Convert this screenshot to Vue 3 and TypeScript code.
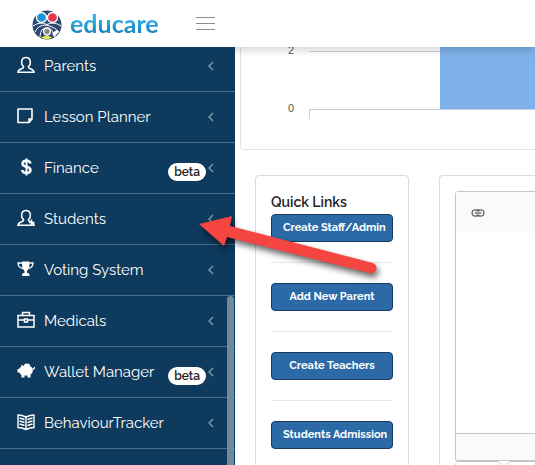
<script setup lang="ts">
interface NavItem {
  label: string
  icon: string
  beta?: boolean
}

const items: NavItem[] = [
  { label: 'Parents', icon: 'user' },
  { label: 'Lesson Planner', icon: 'note' },
  { label: 'Finance', icon: 'dollar', beta: true },
  { label: 'Students', icon: 'userAdd' },
  { label: 'Voting System', icon: 'trophy' },
  { label: 'Medicals', icon: 'case' },
  { label: 'Wallet Manager', icon: 'piggy', beta: true },
  { label: 'BehaviourTracker', icon: 'book' },
]

const links: string[] = ['Create Staff/Admin', 'Add New Parent', 'Create Teachers', 'Students Admission']
</script>

<template>
  <div class="app">
    <header class="topbar">
      <a href="#" class="brand" aria-label="educare home">
        <svg class="logo" viewBox="0 0 30 30" aria-hidden="true">
          <circle cx="15" cy="15" r="14.5" fill="#2d4870" />
          <path d="M1 16Q8 11 15 14.500Q22 11 29 16M3 22Q6 15 14 15Q23 17 27 22M8 27Q8 17 16 18Q22 20 23 27" fill="none" stroke="#fff" stroke-width="1" />
          <circle cx="9.500" cy="7.500" r="5" fill="#1b95d4" stroke="#fff" stroke-width="1.300" />
          <circle cx="20.500" cy="7.500" r="5" fill="#e8344f" stroke="#fff" stroke-width="1.300" />
          <circle cx="15" cy="21.500" r="3.400" fill="#8b8585" stroke="#fff" stroke-width="1.500" />
          <path d="M20 23L25 20L27 22L22 27Z" fill="#fff" />
          <path d="M9 27.500Q15 24 20 27.500Q15 31 9 27.500Z" fill="#e9e645" />
        </svg>
        <span class="word">educare</span>
      </a>
      <button class="burger" type="button" aria-label="Toggle menu"><i></i><i></i><i></i></button>
    </header>

    <nav class="sidebar">
      <ul class="menu">
        <li v-for="item in items" :key="item.label">
          <a href="#" class="row">
            <svg class="icon" viewBox="0 0 18 18" aria-hidden="true">
              <g v-if="item.icon === 'user' || item.icon === 'userAdd'" fill="none" stroke="currentColor" stroke-width="1.500">
                <path d="M6.500 10.500C3.500 8 4 1.500 9 1.500S14.500 8 11.500 10.500C11 12 12 12.300 14 13C16 13.800 17 14.300 17 16.300H1C1 14.300 2 13.800 4 13C6 12.300 7 12 6.500 10.500Z" />
                <path v-if="item.icon === 'userAdd'" d="M14.500 10.500V16M12 13.500H17.500" />
              </g>
              <g v-else-if="item.icon === 'note'" fill="none" stroke="currentColor" stroke-width="1.600">
                <path d="M1 2H15V12L12 15.500H1Z" stroke-linejoin="round" />
                <path d="M15 12H12V15.500" />
              </g>
              <g v-else-if="item.icon === 'dollar'" fill="none" stroke="currentColor">
                <path d="M13.500 5.500C13 3.500 11.500 2.800 9.500 2.800C7 2.800 5.500 4 5.500 5.800C5.500 10 13.500 7.500 13.500 12C13.500 14 12 15 9.500 15C7 15 5.500 14 5 12" stroke-width="2.500" />
                <path d="M9.500 0.500V17.500" stroke-width="2" />
              </g>
              <g v-else-if="item.icon === 'trophy'">
                <path d="M5 1.500H12.500V4Q12.500 9 10 11V13H11.500Q12.500 13 12.500 16H5Q5 13 6 13H7.500V11Q5 9 5 4Z" fill="currentColor" />
                <path d="M5 3H1Q1 7.500 6 8.500M12.500 3H16Q16 7.500 11.500 8.500" fill="none" stroke="currentColor" stroke-width="1.300" />
              </g>
              <g v-else-if="item.icon === 'case'" fill="none" stroke="currentColor" stroke-width="1.500">
                <path d="M1 4.500H17V16H1ZM5.500 4.500V1.500H12.500V4.500M1 9H7M11 9H17" />
                <path d="M7.500 8H10.500V11H7.500Z" />
              </g>
              <g v-else-if="item.icon === 'piggy'" fill="currentColor">
                <path d="M4.500 4.500L4 3Q5.500 2.800 7 4H13Q15.500 5 16 7.500Q16 11 13.500 12.500V15.500H10.500V13.500H7.500V15.500H4.500V13Q3 12 2.500 10.500H0.500V7H2Q2.500 5.500 4.500 4.500Z" />
                <ellipse cx="10" cy="3.500" rx="3" ry="2" />
                <path d="M15.500 7Q17.500 7.500 17.500 5" fill="none" stroke="currentColor" stroke-width="1.200" />
              </g>
              <g v-else fill="none" stroke="currentColor" stroke-width="1.400">
                <path d="M9 4Q5 2 1 2V14.500Q5 14.500 9 16.500Q13 14.500 17 14.500V2Q13 2 9 4ZM9 4V16" />
                <path d="M2.500 5L7.500 6.500M2.500 8L7.500 9.500M2.500 11L7.500 12.500M15.500 5L10.500 6.500M15.500 8L10.500 9.500M15.500 11L10.500 12.500" />
              </g>
            </svg>
            <span class="label">{{ item.label }}</span>
            <span v-if="item.beta" class="beta">beta</span>
            <svg class="chevron" viewBox="0 0 6 10" aria-hidden="true"><path d="M5 1L1 5L5 9" /></svg>
          </a>
        </li>
      </ul>
      <div class="thumb"></div>
    </nav>

    <main class="content">
      <section class="chart">
        <div class="axis"><span>2</span><span>0</span></div>
        <div class="plot"><div class="bar"></div></div>
      </section>

      <div class="panels">
        <section class="card quick">
          <h2>Quick Links</h2>
          <ul>
            <li v-for="link in links" :key="link"><button type="button">{{ link }}</button></li>
          </ul>
        </section>
        <section class="card notes">
          <div class="editor">
            <div class="tools">
              <button type="button" aria-label="Insert link">
                <svg viewBox="0 0 14 8" aria-hidden="true">
                  <path d="M8 2.500V2Q8 1 6.500 1H3Q1 1 1 4T3 7H6.500Q8 7 8 5.500M6 2.500V2Q6 1 7.500 1H11Q13 1 13 4T11 7H7.500Q6 7 6 5.500M3.500 4H10.500" />
                </svg>
              </button>
            </div>
            <div class="page"></div>
            <div class="status"></div>
          </div>
          <div class="next">
            <svg viewBox="0 0 14 6" aria-hidden="true"><path d="M1 0L7 6L13 0" /></svg>
          </div>
        </section>
      </div>
    </main>

    <svg class="pointer" viewBox="0 0 190 76" aria-hidden="true">
      <path d="M4 16L37 8L35 18L178 55Q183 58 181 62Q179 66 174 65L32 29L29 38Z" />
    </svg>
  </div>
</template>

<style>
body {
  margin: 0;
  overflow: hidden;
}
</style>

<style scoped>
* {
  box-sizing: border-box;
}
.app {
  position: relative;
  display: grid;
  grid-template: 47px minmax(0, 1fr) / 235px minmax(0, 1fr);
  height: 100vh;
  overflow: hidden;
  background: #fff;
  font-family: Raleway, "Open Sans", sans-serif;
}
ul {
  list-style: none;
  margin: 0;
  padding: 0;
}
.topbar {
  grid-column: 1 / 3;
  z-index: 2;
  display: flex;
  align-items: center;
  gap: 39px;
  padding-left: 32px;
  background: #fff;
  box-shadow: 0 1px 10px rgba(0, 0, 0, 0.25);
}
.brand {
  display: flex;
  align-items: center;
  gap: 8px;
  width: 125px;
  padding-top: 2px;
  text-decoration: none;
}
.logo {
  width: 30px;
  height: 30px;
  flex: none;
}
.word {
  padding-bottom: 4px;
  font: 700 25px/32px Lato, sans-serif;
  background: linear-gradient(#29b0e4 35%, #176fae 85%);
  background-clip: text;
  color: transparent;
}
.burger {
  display: flex;
  flex-direction: column;
  gap: 5px;
  width: 19px;
  padding: 0;
  border: 0;
  background: none;
}
.burger i {
  height: 1px;
  background: #8d8d8d;
}
.sidebar {
  position: relative;
  z-index: 3;
  overflow: hidden;
  background: #0e3a5d;
}
.menu {
  margin-top: -6px;
}
.row {
  display: flex;
  align-items: center;
  height: 51px;
  padding: 0 21px 0 17px;
  border-bottom: 1px solid #48708f;
  color: #fff;
  text-decoration: none;
}
.icon {
  width: 18px;
  height: 18px;
  margin: 0 9px 2px 0;
  flex: none;
}
.label {
  flex: 1;
  font-size: 15px;
  line-height: 20px;
}
.beta {
  margin: 7px 2px 0 0;
  padding: 0 6px;
  border-radius: 9px;
  background: #fff;
  color: #222;
  font-size: 12px;
  font-weight: 600;
  line-height: 18px;
}
.chevron {
  width: 6px;
  height: 10px;
  fill: none;
  stroke: #7d97a9;
  stroke-width: 1.500;
}
.thumb {
  position: absolute;
  top: 249px;
  right: 1px;
  bottom: 0;
  width: 7px;
  border-radius: 4px 4px 0 0;
  background: #6f899d;
}
.content {
  overflow: hidden;
}
.chart {
  display: flex;
  height: 103px;
  margin-left: 5px;
  border: solid #e4e4e4;
  border-width: 0 0 1px 1px;
  border-radius: 0 0 0 4px;
}
.axis {
  display: flex;
  flex-direction: column;
  gap: 42px;
  width: 68px;
  margin-top: -5px;
  padding-right: 15px;
  color: #555;
  font: 11px/16px "Liberation Sans", sans-serif;
  text-align: right;
}
.plot {
  position: relative;
  flex: 1;
  height: 63px;
  margin-top: 4px;
  padding-left: 131px;
  border-top: 1px solid #d0d3d6;
}
.plot::after {
  content: "";
  position: absolute;
  inset: 57px 0 -5px 0;
  border: solid #c3cfdf;
  border-width: 1px 0 0 1px;
}
.bar {
  height: 62px;
  margin-top: -5px;
  background: #7fb2ea;
}
.panels {
  display: flex;
  gap: 30px;
  padding: 25px 0 0 20px;
}
.card {
  height: 400px;
  border: 1px solid #dcdcdc;
  border-radius: 4px;
}
.quick {
  width: 154px;
  flex: none;
  padding: 16px 15px;
}
h2 {
  margin: 0;
  color: #222;
  font-size: 14px;
  font-weight: 600;
  line-height: 20px;
}
.quick li {
  height: 51px;
  margin-bottom: 18px;
  padding-top: 2px;
  border-bottom: 1px solid #e8e8e8;
}
.quick button {
  display: block;
  width: 100%;
  height: 28px;
  padding: 0 11px;
  overflow: hidden;
  border: 1px solid #173c5f;
  border-radius: 4px;
  background: #2b6aa6;
  color: #fff;
  font: 700 11px/16px Raleway, "Open Sans", sans-serif;
  white-space: nowrap;
}
.notes {
  flex: 1;
  padding: 15px 0 0 15px;
  border-right: 0;
  border-radius: 4px 0 0 4px;
}
.editor {
  border: solid #c6c6c6;
  border-width: 1px 0 2px 1px;
  border-radius: 4px 0 0 4px;
}
.tools {
  display: flex;
  align-items: center;
  height: 41px;
  padding-left: 15px;
  background: #fafafa;
}
.tools button {
  display: flex;
  padding: 0;
  border: 0;
  background: none;
}
.tools svg {
  width: 14px;
  height: 8px;
  fill: none;
  stroke: #333;
}
.page {
  height: 200px;
}
.status {
  height: 27px;
  border-top: 1px solid #c6c6c6;
  background: #fafafa;
}
.next {
  height: 60px;
  margin-top: -1px;
  padding-left: 41px;
  border: solid #d5d5d5;
  border-width: 0 0 0 1px;
  border-radius: 4px 0 0;
}
.next svg {
  display: block;
  width: 14px;
  height: 6px;
  fill: #fff;
  stroke: #d0d0d0;
}
.pointer {
  position: absolute;
  z-index: 4;
  top: 208px;
  left: 195px;
  width: 190px;
  height: 76px;
  overflow: visible;
  fill: #f44541;
  filter: drop-shadow(2px 4px 3px rgba(0, 0, 0, 0.6));
  pointer-events: none;
}
</style>
